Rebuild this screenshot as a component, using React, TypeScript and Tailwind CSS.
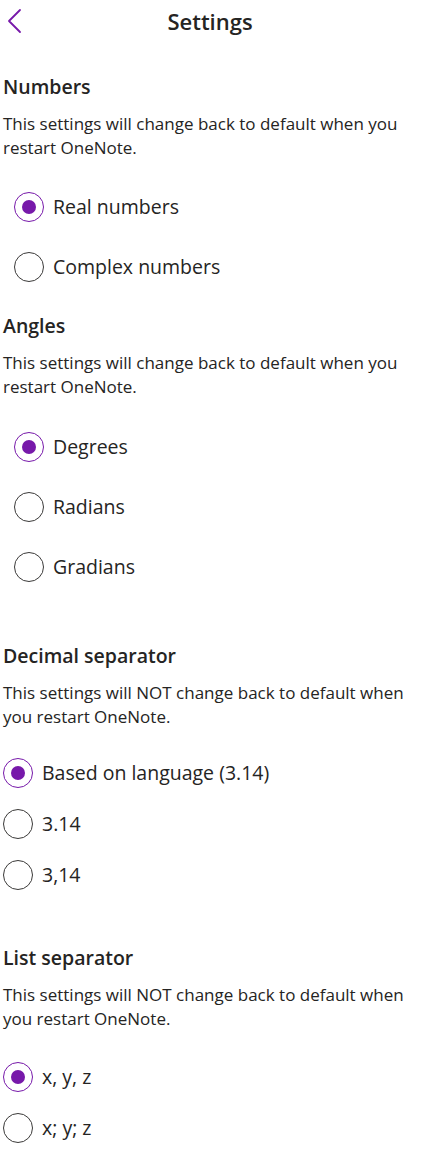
import React, { useState } from 'react';

interface Section {
  title: string;
  note: string;
  options: string[];
  compact: boolean;
  gapBefore: string;
  listGap: string;
}

const sections: Section[] = [
  {
    title: 'Numbers',
    note: 'This settings will change back to default when you restart OneNote.',
    options: ['Real numbers', 'Complex numbers'],
    compact: false,
    gapBefore: 'mt-[32px]',
    listGap: 'mt-[17px]',
  },
  {
    title: 'Angles',
    note: 'This settings will change back to default when you restart OneNote.',
    options: ['Degrees', 'Radians', 'Gradians'],
    compact: false,
    gapBefore: 'mt-[16px]',
    listGap: 'mt-[18px]',
  },
  {
    title: 'Decimal separator',
    note: 'This settings will NOT change back to default when you restart OneNote.',
    options: ['Based on language (3.14)', '3.14', '3,14'],
    compact: true,
    gapBefore: 'mt-[46px]',
    listGap: 'mt-[18px]',
  },
  {
    title: 'List separator',
    note: 'This settings will NOT change back to default when you restart OneNote.',
    options: ['x, y, z', 'x; y; z'],
    compact: true,
    gapBefore: 'mt-[45px]',
    listGap: 'mt-[20px]',
  },
];

const Radio: React.FC<{ checked: boolean }> = ({ checked }) => (
  <span
    className={`flex items-center justify-center w-[30px] h-[30px] rounded-full border-[1.5px] shrink-0 ${
      checked ? 'border-[#7719aa]' : 'border-[#3b3a39]'
    }`}
  >
    {checked && <span className="w-[14px] h-[14px] rounded-full bg-[#7719aa]" />}
  </span>
);

const SettingsSection: React.FC<{ section: Section }> = ({ section }) => {
  const [selected, setSelected] = useState(0);
  return (
    <div className={section.gapBefore}>
      <h2 className="text-[19.5px] leading-[26px] font-semibold">{section.title}</h2>
      <p className="mt-[12px] text-[17px] leading-[24px] pr-[14px]">{section.note}</p>
      <div className={section.listGap}>
        {section.options.map((opt, i) => (
          <button
            key={opt}
            onClick={() => setSelected(i)}
            className={`flex items-center w-full text-left ${
              section.compact ? 'h-[51px] gap-[9px]' : 'h-[60px] pl-[11px] gap-[9px]'
            }`}
          >
            <Radio checked={selected === i} />
            <span className="text-[19.5px]">{opt}</span>
          </button>
        ))}
      </div>
    </div>
  );
};

export default function App() {
  return (
    <div
      className="min-h-screen bg-white text-[#252423]"
      style={{ fontFamily: '"Open Sans", "Noto Sans", sans-serif' }}
    >
      <header className="relative h-[42px] flex items-center justify-center">
        <button className="absolute left-[6px] top-[8px]" aria-label="Back">
          <svg width="18" height="26" viewBox="0 0 18 26" fill="none">
            <path d="M14 2 L3 13 L14 24" stroke="#7719aa" strokeWidth="1.8" strokeLinecap="round" strokeLinejoin="round" />
          </svg>
        </button>
        <h1 className="text-[22px] font-semibold mr-[10px]">Settings</h1>
      </header>
      <main className="px-[3px] pb-[5px]">
        {sections.map((s) => (
          <SettingsSection key={s.title} section={s} />
        ))}
      </main>
    </div>
  );
}
